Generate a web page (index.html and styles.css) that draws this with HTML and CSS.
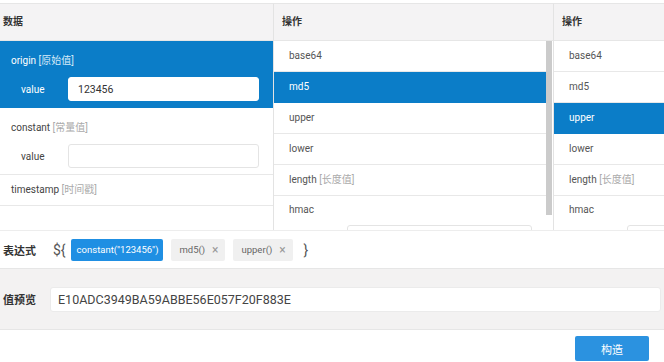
FILE: index.html
```html
<!DOCTYPE html>
<html lang="zh-CN">
<head>
    <meta charset="UTF-8">
    <title>表达式构造</title>
    <link rel="stylesheet" href="styles.css">
</head>
<body>
    <div class="panel">
        <div class="col col-data">
            <div class="col-head">数据</div>
            <div class="data-item active">
                <div class="item-title">origin <span class="tip">[原始值]</span></div>
                <div class="field">
                    <span class="field-label">value</span>
                    <input class="field-input" type="text" value="123456">
                </div>
            </div>
            <div class="data-item">
                <div class="item-title">constant <span class="tip">[常量值]</span></div>
                <div class="field">
                    <span class="field-label">value</span>
                    <input class="field-input" type="text" value="">
                </div>
            </div>
            <div class="data-item simple">
                <div class="item-title">timestamp <span class="tip">[时间戳]</span></div>
            </div>
        </div>

        <div class="col col-ops">
            <div class="col-head">操作</div>
            <div class="ops-body">
                <ul class="ops-list">
                    <li>base64</li>
                    <li class="active">md5</li>
                    <li>upper</li>
                    <li>lower</li>
                    <li>length <span class="tip">[长度值]</span></li>
                    <li class="has-field"><span class="op-name">hmac</span>
                        <input class="ops-input" type="text">
                    </li>
                </ul>
                <div class="scroll"><div class="thumb"></div></div>
            </div>
        </div>

        <div class="col col-ops2">
            <div class="col-head">操作</div>
            <ul class="ops-list">
                <li>base64</li>
                <li>md5</li>
                <li class="active">upper</li>
                <li>lower</li>
                <li>length <span class="tip">[长度值]</span></li>
                <li class="has-field"><span class="op-name">hmac</span>
                    <input class="ops-input" type="text">
                </li>
            </ul>
        </div>
    </div>

    <div class="expr">
        <span class="row-label">表达式</span>
        <span class="brace">${</span>
        <span class="chip primary">constant("123456")</span>
        <span class="chip">md5()<i class="close">×</i></span>
        <span class="chip">upper()<i class="close">×</i></span>
        <span class="brace end">}</span>
    </div>

    <div class="preview">
        <span class="row-label">值预览</span>
        <div class="preview-box">E10ADC3949BA59ABBE56E057F20F883E</div>
    </div>

    <div class="footer">
        <button class="btn">构造</button>
    </div>
</body>
</html>
```

FILE: styles.css
```css
*{
    margin: 0;
    padding: 0;
    box-sizing: border-box;
}
body{
    width: 664px;
    height: 362px;
    overflow: hidden;
    background-color: #fff;
    font-family: Roboto, "Noto Sans CJK SC", sans-serif;
    font-size: 10px;
    color: #444;
}
ul{
    list-style-type: none;
}
.panel{
    display: flex;
    height: 230px;
    overflow: hidden;
}
.col{
    flex-shrink: 0;
    margin-top: 3px;
    border-top: 1px solid #e6e6e6;
    border-right: 1px solid #e3e3e3;
}
.col-data{
    width: 274px;
}
.col-ops{
    width: 280px;
}
.col-ops2{
    flex: 1;
    min-width: 0;
    border-right: none;
}
.col-head{
    height: 37px;
    line-height: 36px;
    padding-left: 8px;
    background-color: #f4f3f4;
    border-bottom: 1px solid #e6e6e6;
    font-weight: bold;
    color: #333;
}
.col-data .col-head{
    padding-left: 3px;
}
.tip{
    color: #aaa;
}

/* 数据列 */
.data-item{
    padding: 12px 14px 6px 11px;
    border-bottom: 1px solid #e8e8e8;
}
.data-item.simple{
    height: 31px;
    padding-top: 7px;
}
.data-item.active{
    background-color: #0b7dc8;
    color: #fff;
    border-bottom-color: #0b7dc8;
}
.data-item.active .tip{
    color: #d8ebf8;
}
.item-title{
    line-height: 16px;
}
.field{
    display: flex;
    align-items: center;
    margin-top: 8px;
}
.field-label{
    width: 57px;
    padding-left: 10px;
}
.field-input{
    width: 191px;
    height: 24px;
    padding: 0 9px;
    border: 1px solid #e4e4e4;
    border-radius: 3px;
    font-family: inherit;
    font-size: 10.5px;
    color: #333;
    background-color: #fff;
    outline: none;
}
.data-item.active .field-input{
    border-color: #fff;
}

/* 操作列 */
.ops-body{
    display: flex;
}
.ops-list{
    flex: 1;
}
.ops-list li{
    height: 31px;
    line-height: 30px;
    padding-left: 15px;
    border-bottom: 1px solid #e8e8e8;
    color: #555;
    white-space: nowrap;
}
.ops-list li.active{
    background-color: #0b7dc8;
    color: #fff;
    border-bottom-color: #0b7dc8;
}
.ops-list li.has-field{
    height: 60px;
}
.op-name{
    display: block;
    line-height: 28px;
}
.ops-input{
    display: block;
    width: 185px;
    height: 24px;
    margin: 1px 0 0 58px;
    border: 1px solid #e4e4e4;
    border-radius: 3px;
    outline: none;
}
.scroll{
    width: 6px;
    margin-right: 1px;
}
.scroll .thumb{
    height: 174px;
    background-color: #cbcbcb;
}

/* 表达式 */
.expr{
    display: flex;
    align-items: center;
    height: 38px;
    padding-left: 3px;
    border-top: 1px solid #ededed;
}
.row-label{
    width: 50px;
    font-size: 11px;
    font-weight: bold;
    color: #333;
}
.brace{
    font-size: 14px;
    color: #555;
    margin-right: 5px;
}
.brace.end{
    margin-left: 3px;
}
.chip{
    display: inline-flex;
    align-items: center;
    height: 22px;
    padding: 0 7px 0 8px;
    margin-right: 8px;
    border-radius: 2px;
    background-color: #f0f0f0;
    font-size: 9.5px;
    color: #666;
}
.chip.primary{
    background-color: #1f8fe3;
    color: #fff;
    padding: 0 5px 0 6px;
}
.close{
    font-style: normal;
    margin-left: 7px;
    font-size: 12px;
    color: #999;
}

/* 值预览 */
.preview{
    display: flex;
    align-items: center;
    height: 62px;
    padding-left: 3px;
    background-color: #f3f2f2;
    border-top: 1px solid #e6e6e6;
    border-bottom: 1px solid #e6e6e6;
}
.preview .row-label{
    width: 47px;
}
.preview-box{
    width: 611px;
    height: 25px;
    line-height: 24px;
    padding-left: 7px;
    background-color: #fff;
    border: 1px solid #ebebeb;
    border-radius: 3px;
    font-size: 12.5px;
    color: #444;
}

.footer{
    display: flex;
    justify-content: flex-end;
    padding: 6px 15px 0 0;
}
.btn{
    width: 74px;
    height: 25px;
    border: none;
    border-radius: 2px;
    background-color: #2b92e0;
    color: #fff;
    font-family: inherit;
    font-size: 11px;
}
```
